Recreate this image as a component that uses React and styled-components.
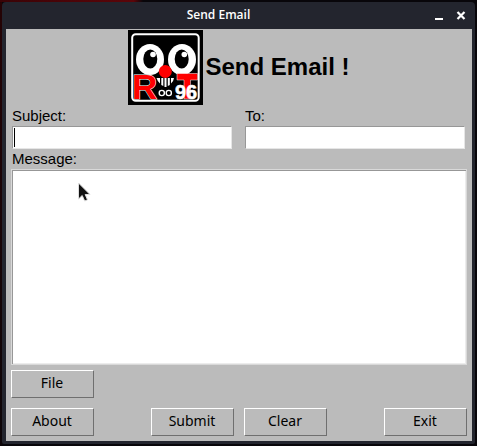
import React from "react";
import styled, { createGlobalStyle } from "styled-components";

const GlobalStyle = createGlobalStyle`
  *, *::before, *::after { box-sizing: border-box; }
  body { margin: 0; background: #08060a; }
`;

const Desktop = styled.div`
  min-height: 100vh;
  display: flex;
  padding: 2px;
  background:
    linear-gradient(90deg, #3a0306, #5c0509 28%, #08060a 30%) top / 100% 2px no-repeat,
    linear-gradient(180deg, #250305, #0c0508) left / 2px 100% no-repeat,
    #08060a;
`;

const Window = styled.main`
  position: relative;
  flex: 1;
  display: flex;
  flex-direction: column;
  padding: 0 3px 3px 4px;
  border-radius: 4px 4px 2px 2px;
  background: #23252e;
`;

const TitleBar = styled.header`
  display: grid;
  grid-template-columns: 1fr auto 1fr;
  align-items: center;
  height: 27px;
  padding-right: 3px;
`;

const WindowTitle = styled.span`
  grid-column: 2;
  margin-right: 38px;
  padding-bottom: 2px;
  color: #fff;
  font: 600 12px/18px "Open Sans", "Noto Sans", sans-serif;
`;

const WindowControls = styled.div`
  justify-self: end;
  display: flex;
  gap: 6px;
  padding-bottom: 1px;
`;

const ControlButton = styled.button`
  display: grid;
  place-items: center;
  width: 16px;
  height: 16px;
  padding: 0;
  border: 0;
  background: none;
  color: #fff;
`;

const Form = styled.form`
  flex: 1;
  display: flex;
  flex-direction: column;
  padding: 1px 5px 5px;
  background: #bbb;
  color: #000;
`;

const Banner = styled.div`
  display: flex;
  justify-content: center;
  align-items: center;
  gap: 2px;
`;

const Heading = styled.h1`
  margin: 0;
  padding-bottom: 2px;
  font: bold 24px/28px "Liberation Sans", Arial, sans-serif;
`;

const FieldRow = styled.div`
  display: grid;
  grid-template-columns: 1fr 1fr;
  gap: 13px;
  padding: 2px 2px 0 1px;
`;

const Field = styled.div`
  position: relative;
  display: flex;
  flex-direction: column;
`;

const Label = styled.label`
  padding-bottom: 2px;
  font: 15px/17px "Liberation Sans", Arial, sans-serif;
`;

const TextInput = styled.input`
  width: 100%;
  height: 23px;
  padding: 0 3px;
  border: 1px solid;
  border-color: #979797 #e6e6e6 #e6e6e6 #979797;
  border-radius: 0;
  outline: 0;
  background: #fff;
  font: 15px "Liberation Sans", Arial, sans-serif;
`;

const Caret = styled.span`
  position: absolute;
  left: 2px;
  bottom: 2px;
  width: 1px;
  height: 19px;
  background: #000;
`;

const MessageField = styled.div`
  flex: 1;
  display: flex;
  flex-direction: column;
  padding-top: 1px;

  ${Label} { padding-left: 1px; }
`;

const MessageBox = styled.textarea`
  flex: 1;
  width: 100%;
  min-height: 120px;
  padding: 3px;
  border: 1px solid;
  border-color: #d9d9d9;
  border-radius: 0;
  outline: 0;
  resize: none;
  background: #fff;
  box-shadow: inset 1px 1px #979797, inset -1px -1px #ececec;
  font: 15px/18px "Liberation Sans", Arial, sans-serif;
`;

const ButtonRow = styled.div`
  display: flex;
  justify-content: space-between;
  padding-top: ${(p) => p.$space}px;
`;

const ButtonPair = styled.div`
  display: flex;
  gap: 10px;
`;

const Button = styled.button`
  width: 83px;
  height: 28px;
  padding: 0 1px 2px 0;
  border: 1px solid;
  border-color: #fff #6f6f6f #6f6f6f #fff;
  border-radius: 0;
  background: #bbb;
  color: #000;
  font: 14px/20px "Noto Sans", "DejaVu Sans", sans-serif;
`;

const Pointer = styled.svg`
  position: absolute;
  left: 75px;
  top: 179px;
  pointer-events: none;
`;

const LogoText = styled.text`
  font-family: "Liberation Sans", Arial, sans-serif;
  font-weight: bold;
  font-size: ${(p) => p.$size}px;
`;

function Logo() {
  return (
    <svg width="75" height="75" viewBox="0 0 75 75" role="img" aria-label="ROOT96 logo">
      <rect width="75" height="75" fill="#000" />
      <rect x="4.2" y="4.200" width="66.500" height="66.500" rx="3.500" fill="none" stroke="#fff" strokeWidth="2" />
      <ellipse cx="22" cy="29.500" rx="14" ry="15.500" fill="#fff" />
      <ellipse cx="54" cy="29.500" rx="14" ry="15.500" fill="#fff" />
      <ellipse cx="22.300" cy="29" rx="7" ry="9.500" fill="#000" />
      <ellipse cx="53.700" cy="29" rx="7" ry="9.500" fill="#000" />
      <circle cx="25" cy="24.500" r="2.800" fill="#fff" />
      <circle cx="56.300" cy="24.500" r="2.800" fill="#fff" />
      <LogoText $size={35} x="4" y="69" fill="#f00" stroke="#fff" strokeWidth="1" paintOrder="stroke">R</LogoText>
      <path d="M49 43.500H69.500V50H62.500V69H56V50H49Z" fill="#f00" stroke="#fff" strokeWidth="0.500" />
      <circle cx="37.300" cy="41.500" r="6.500" fill="#f00" />
      <path d="M28.500 48H32V53.500Q29.500 51.500 28.500 48ZM33.300 48H35.300V56L33.300 55ZM36.500 48H38.500V57H36.500ZM39.800 48H41.800V55L39.800 56ZM43 48H46Q45.500 51.500 43 53.500Z" fill="#fff" />
      <circle cx="33.800" cy="63" r="2.600" fill="none" stroke="#fff" strokeWidth="1.400" />
      <circle cx="40.800" cy="63" r="2.600" fill="none" stroke="#fff" strokeWidth="1.400" />
      <LogoText $size={20} x="47" y="69" fill="#fff" stroke="#fff" strokeWidth="0.500">96</LogoText>
    </svg>
  );
}

export default function App() {
  return (
    <>
      <GlobalStyle />
      <Desktop>
        <Window>
          <TitleBar>
            <WindowTitle>Send Email</WindowTitle>
            <WindowControls>
              <ControlButton type="button" aria-label="Minimize">
                <svg width="16" height="16" viewBox="0 0 16 16"><path d="M4 11h8v2H4z" fill="currentColor" /></svg>
              </ControlButton>
              <ControlButton type="button" aria-label="Close">
                <svg width="16" height="16" viewBox="0 0 16 16"><path d="M4.500 5l7 7M11.500 5l-7 7" stroke="currentColor" strokeWidth="2.200" /></svg>
              </ControlButton>
            </WindowControls>
          </TitleBar>
          <Form onSubmit={(e) => e.preventDefault()}>
            <Banner>
              <Logo />
              <Heading>Send Email !</Heading>
            </Banner>
            <FieldRow>
              <Field>
                <Label htmlFor="subject">Subject:</Label>
                <TextInput id="subject" type="text" />
                <Caret />
              </Field>
              <Field>
                <Label htmlFor="to">To:</Label>
                <TextInput id="to" type="text" />
              </Field>
            </FieldRow>
            <MessageField>
              <Label htmlFor="message">Message:</Label>
              <MessageBox id="message" />
            </MessageField>
            <ButtonRow $space={5}>
              <Button type="button">File</Button>
            </ButtonRow>
            <ButtonRow $space={10}>
              <Button type="button">About</Button>
              <ButtonPair>
                <Button type="submit">Submit</Button>
                <Button type="reset">Clear</Button>
              </ButtonPair>
              <Button type="button">Exit</Button>
            </ButtonRow>
          </Form>
          <Pointer width="14" height="22" viewBox="0 0 14 22" aria-hidden="true">
            <path d="M1.500 2V18L5.200 14.500L7.700 20L10.500 18.800L8.200 13.500H13Z" fill="#111" stroke="#ddd" strokeWidth="1" />
          </Pointer>
        </Window>
      </Desktop>
    </>
  );
}
